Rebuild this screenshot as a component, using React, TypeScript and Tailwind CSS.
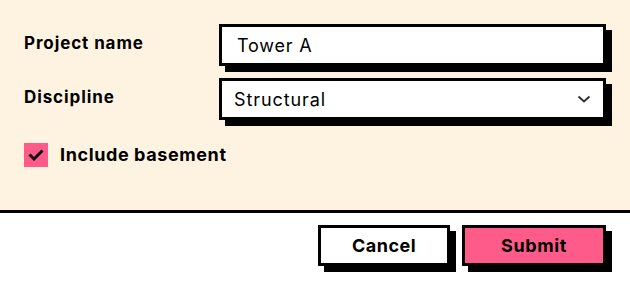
import React from "react";

export default function App() {
  return (
    <div className="w-[630px] h-[286px] bg-white font-['Inter',sans-serif] text-black">
      <div className="h-[213px] bg-[#fef3e0] border-b-[3px] border-black pt-6 px-6">
        <div className="flex items-center h-[42px]">
          <label className="w-[195px] text-[17px] font-bold tracking-[0.9px] -mt-[3px]">Project name</label>
          <div className="flex-1 h-[42px] bg-white border-[3px] border-black shadow-[6px_6px_0_0_#000] flex items-center pl-[15px] text-[18px] tracking-[0.8px]">
            Tower A
          </div>
        </div>
        <div className="flex items-center h-[42px] mt-3">
          <label className="w-[195px] text-[17px] font-bold tracking-[0.9px] -mt-[3px]">Discipline</label>
          <div className="flex-1 h-[42px] bg-white border-[3px] border-black shadow-[6px_6px_0_0_#000] flex items-center justify-between pl-3 pr-[12px] text-[18px] tracking-[0.9px]">
            <span>Structural</span>
            <svg width="14" height="8" viewBox="0 0 14 8" fill="none">
              <path d="M1.5 1.5 L7 6.5 L12.5 1.5" stroke="#333" strokeWidth="2" />
            </svg>
          </div>
        </div>
        <div className="flex items-center mt-[21px] gap-3">
          <div className="w-6 h-6 bg-[#ff5b8a] flex items-center justify-center">
            <svg width="16" height="12" viewBox="0 0 16 12" fill="none">
              <path d="M1.5 5.5 L6 10 L14.5 1.5" stroke="#111" strokeWidth="3" />
            </svg>
          </div>
          <span className="text-[18px] font-bold tracking-[0.6px]">Include basement</span>
        </div>
      </div>
      <div className="flex justify-end gap-3 px-6 pt-3">
        <button className="w-[132px] h-[41px] bg-white border-[3px] border-black shadow-[6px_6px_0_0_#000] text-[18px] font-bold tracking-[0.5px]">
          Cancel
        </button>
        <button className="w-[144px] h-[41px] bg-[#ff5b8a] border-[3px] border-black shadow-[6px_6px_0_0_#000] text-[18px] font-bold tracking-[0.6px]">
          Submit
        </button>
      </div>
    </div>
  );
}
